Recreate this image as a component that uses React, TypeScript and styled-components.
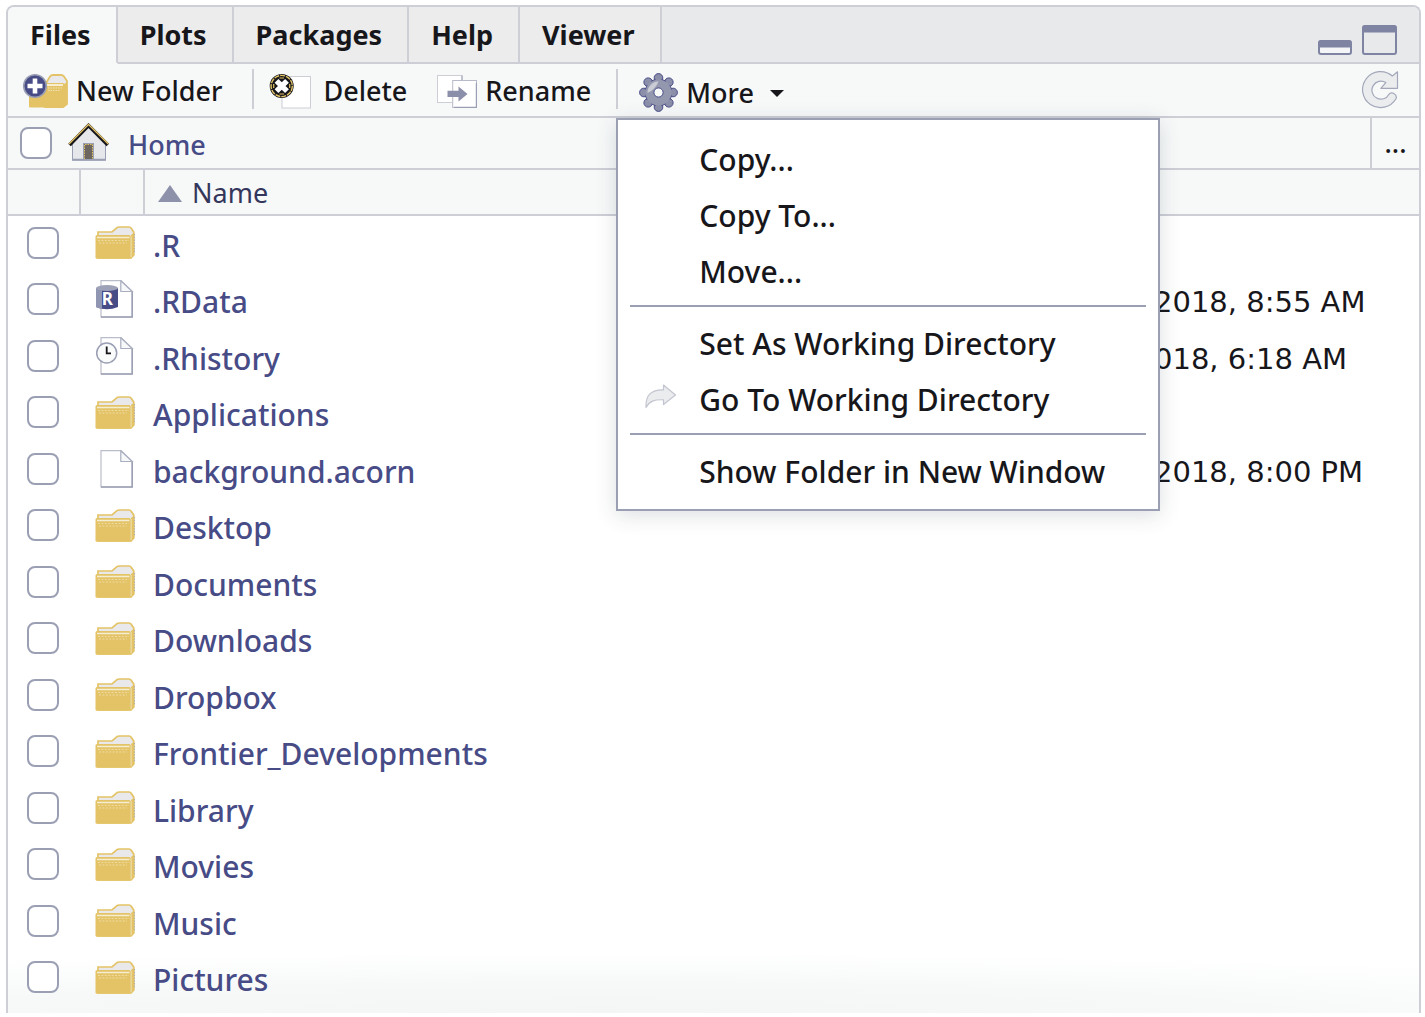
import React, { useState } from "react";
import styled, { createGlobalStyle, css } from "styled-components";

const color = {
  line: "#cdced6",
  edge: "#9a9fb3",
  strip: "#e8e9eb",
  tab: "#ececed",
  panel: "#f7f9f9",
  ink: "#17171b",
  link: "#474b86",
  gold: "#e3c366",
};

const GlobalStyle = createGlobalStyle`
  * { box-sizing: border-box; }
  body {
    margin: 0;
    background: #fff;
    color: ${color.ink};
    font-family: "Noto Sans", "Open Sans", sans-serif;
    font-weight: 500;
  }
  button {
    font: inherit;
    color: inherit;
    background: none;
    border: 0;
    padding: 0;
    margin: 0;
    cursor: pointer;
  }
  svg { display: block; flex: none; }
`;

const Page = styled.main`
  padding: 5px 4px 4px 6px;
`;

const Pane = styled.section`
  border: 2px solid ${color.line};
  border-bottom: 0;
  border-radius: 8px 8px 0 0;
  padding-bottom: 6px;
  background: radial-gradient(ellipse 92% 60px at 42% 100%, #f4f6f6 0%, #f7f9f9 50%, #fff 100%);
`;

const TabStrip = styled.div`
  display: flex;
  height: 57px;
  background: ${color.strip};
  border-radius: 6px 6px 0 0;
`;

const Tab = styled.button<{ $active: boolean }>`
  padding: 0 25px 0 22px;
  font-size: 27px;
  line-height: 36px;
  font-weight: 700;
  border-right: 2px solid ${color.line};
  border-bottom: 2px solid ${color.line};
  background: ${color.tab};
  ${(p) =>
    p.$active &&
    css`
      background: ${color.panel};
      border-bottom-color: ${color.panel};
      border-top-left-radius: 6px;
    `}
`;

const WindowButtons = styled.div`
  flex: 1;
  display: flex;
  justify-content: flex-end;
  align-items: flex-end;
  gap: 10px;
  padding: 0 22px 7px 0;
  border-bottom: 2px solid ${color.line};
`;

const Toolbar = styled.div`
  display: flex;
  align-items: center;
  height: 54px;
  padding: 2px 20px 0 14px;
  background: ${color.panel};
  border-bottom: 2px solid ${color.line};
  font-size: 27px;
  line-height: 36px;
`;

const ToolButton = styled.button<{ $gap: number }>`
  display: flex;
  align-items: center;
  gap: ${(p) => p.$gap}px;
  white-space: nowrap;

  & + & {
    margin-left: 30px;
  }
`;

const Divider = styled.span<{ $before: number; $after: number }>`
  width: 2px;
  height: 40px;
  margin: 0 ${(p) => p.$after}px 4px ${(p) => p.$before}px;
  background: ${color.line};
`;

const MenuAnchor = styled.div`
  position: relative;
  align-self: stretch;
  display: flex;
  align-items: center;
  padding-top: 3px;
`;

const Caret = styled.span`
  margin: 2px 0 0 8px;
  border: 7px solid transparent;
  border-top-color: ${color.ink};
  border-bottom: 0;
`;

const Menu = styled.div`
  position: absolute;
  z-index: 2;
  top: calc(100% + 2px);
  left: -23px;
  width: 544px;
  padding: 12px 12px 9px;
  background: #fff;
  border: 2px solid ${color.edge};
  box-shadow: 0 4px 20px rgba(40, 50, 60, 0.16);
`;

const MenuItem = styled.button`
  display: grid;
  grid-template-columns: 32px 1fr;
  gap: 22px;
  align-items: center;
  width: 100%;
  height: 56px;
  padding-left: 15px;
  font-size: 30px;
  line-height: 40px;
  text-align: left;
  white-space: nowrap;
`;

const MenuRule = styled.hr`
  height: 2px;
  margin: 5px 0 9px;
  border: 0;
  background: ${color.edge};
`;

const Refresh = styled.button`
  margin-left: auto;
  padding-bottom: 4px;
`;

const PathBar = styled.nav`
  display: flex;
  align-items: center;
  height: 52px;
  padding-left: 12px;
  background: ${color.panel};
  border-bottom: 2px solid ${color.line};
  font-size: 27px;
  line-height: 36px;
`;

const HomeLink = styled.a`
  display: flex;
  align-items: flex-start;
  gap: 18px;
  margin-left: 16px;
  color: ${color.link};
  text-decoration: none;
`;

const HomeLabel = styled.span`
  padding-top: 4px;
`;

const Browse = styled.button`
  align-self: stretch;
  width: 49px;
  margin-left: auto;
  border-left: 2px solid ${color.line};
`;

const Check = styled.input`
  appearance: none;
  display: block;
  flex: none;
  width: 32px;
  height: 32px;
  margin: 0;
  background: #fff;
  border: 2px solid ${color.edge};
  border-radius: 8px;

  &:checked {
    background: ${color.link};
  }
`;

const FileTable = styled.table`
  width: 100%;
  border-collapse: separate;
  border-spacing: 0;
  table-layout: fixed;
`;

const HeadCell = styled.th<{ $width?: number; $ruled?: boolean }>`
  width: ${(p) => (p.$width ? `${p.$width}px` : "auto")};
  height: 46px;
  padding: 0;
  background: ${color.panel};
  border-bottom: 2px solid ${color.line};
  border-right: ${(p) => (p.$ruled ? `2px solid ${color.line}` : "0")};
  font-size: 27px;
  line-height: 36px;
  font-weight: 400;
  text-align: left;
`;

const SortButton = styled.button`
  display: flex;
  align-items: center;
  gap: 9px;
  padding: 2px 0 0 12px;
  color: #34365c;
`;

const FileRow = styled.tr`
  height: 57px;

  &:nth-child(even) {
    height: 56px;
  }
`;

const Cell = styled.td<{ $left: number; $raised?: boolean }>`
  padding: ${(p) => (p.$raised ? 0 : 2)}px 0 ${(p) => (p.$raised ? 4 : 0)}px ${(p) => p.$left}px;
  font-size: 30px;
  line-height: 40px;
  white-space: nowrap;
`;

const DateCell = styled(Cell)`
  font-family: "DejaVu Sans", sans-serif;
  font-size: 29px;
`;

const FileLink = styled.a`
  color: ${color.link};
  text-decoration: none;
`;

function NewFolderIcon() {
  return (
    <svg width="46" height="36" viewBox="0 0 46 36" aria-hidden="true">
      <path d="M23 12 L28 3.5 Q29 2 31 2 H39 Q41 2 42 3.5 L45 8 V31 L41 34 H23 Z" fill="#e9e9ec" stroke={color.gold} strokeWidth="1.8" />
      <path d="M42 11 L45 9 V31 L42 34 Z" fill={color.gold} />
      <rect x="7" y="10" width="35" height="24.5" rx="1" fill={color.gold} />
      <path d="M25 12 H41" stroke="#fff" strokeWidth="1.4" />
      <path d="M26 15 H40 M26 17.5 H38" stroke="#f1e2b2" strokeWidth="1" strokeDasharray="1.5 1" />
      <circle cx="13" cy="13" r="11.3" fill={color.link} stroke={color.edge} strokeWidth="1.6" />
      <path d="M13 5.5 V20.5 M5.5 13 H20.5" stroke="#fff" strokeWidth="4.6" />
    </svg>
  );
}

function DeleteIcon() {
  return (
    <svg width="42" height="36" viewBox="0 0 42 36" aria-hidden="true">
      <rect x="13" y="3.5" width="28.5" height="31.5" fill="#fff" stroke={color.line} />
      <circle cx="12.7" cy="13" r="12" fill={color.ink} />
      <circle cx="12.7" cy="13" r="10.6" fill="none" stroke={color.gold} strokeWidth="1.4" strokeDasharray="5 1" />
      <path d="M7.5 7.8 L18 18.2 M18 7.8 L7.5 18.2" stroke="#fff" strokeWidth="5.4" />
      <path d="M10.5 5 h4.5 M10.5 21 h4.5 M4.7 11 v4 M20.7 11 v4" stroke={color.gold} strokeWidth="1.2" />
    </svg>
  );
}

function RenameIcon() {
  return (
    <svg width="40" height="33" viewBox="0 0 40 33" aria-hidden="true">
      <rect x="0.5" y="0.5" width="24.5" height="27" fill="#fff" stroke={color.line} />
      <path d="M25 0.5 V5" stroke={color.edge} />
      <rect x="15.7" y="5.5" width="23.8" height="27" fill="#fff" stroke="#b7bac9" />
      <path d="M39.5 8 V32.5 H17" fill="none" stroke={color.edge} strokeWidth="1.4" />
      <path d="M10.5 15.8 H21.5 V11.5 L30.5 19 L21.5 26.5 V22 H10.5 Z" fill="#8b8fa9" />
    </svg>
  );
}

function GearIcon() {
  const teeth = Array.from({ length: 8 }, (_, i) => {
    const a = (i * Math.PI) / 4;
    return { x: 19.5 + 14.6 * Math.cos(a), y: 19.5 + 14.6 * Math.sin(a) };
  });
  return (
    <svg width="39" height="39" viewBox="0 0 39 39" aria-hidden="true">
      {teeth.map((t, i) => (
        <circle key={i} cx={t.x} cy={t.y} r="4.3" fill="#8b8fa9" stroke={color.link} strokeWidth="1" />
      ))}
      <circle cx="19.5" cy="19.5" r="13.8" fill={color.link} />
      {teeth.map((t, i) => (
        <circle key={i} cx={t.x} cy={t.y} r="3.2" fill="#8b8fa9" />
      ))}
      <circle cx="19.5" cy="19.5" r="13" fill="#9498ae" />
      <path d="M8.5 20 A11 11 0 0 1 19.5 8.5 A20 20 0 0 1 8.5 20 Z" fill="#c9cbd5" />
      <circle cx="19.5" cy="19.5" r="4.6" fill="#f7f9f9" stroke={color.link} strokeWidth="1" />
    </svg>
  );
}

function RefreshIcon() {
  return (
    <svg width="37" height="39" viewBox="0 0 37 39" aria-hidden="true">
      <path
        d="M35.5 1.8 V18.3 H18.8 L23.8 12.6 A9 9 0 1 0 27 24.2 Q28.6 22 31.5 23.2 Q35.4 25.2 34 28.8 A18 18 0 1 1 30.4 6 Z"
        fill="#ebecee"
        stroke="#a3a7b9"
        strokeWidth="1.2"
        strokeLinejoin="round"
      />
    </svg>
  );
}

function MinimizeIcon() {
  return (
    <svg width="34" height="15" viewBox="0 0 34 15" aria-hidden="true">
      <rect x="1" y="1" width="32" height="13" rx="2" fill="#f4f5f6" stroke="#7f84a3" strokeWidth="2" />
      <path d="M0 7.5 V4 Q0 0 4 0 H30 Q34 0 34 4 V7.5 Z" fill="#7f84a3" />
    </svg>
  );
}

function MaximizeIcon() {
  return (
    <svg width="35" height="30" viewBox="0 0 35 30" aria-hidden="true">
      <rect x="1" y="1" width="33" height="28" rx="2" fill={color.strip} stroke="#7f84a3" strokeWidth="2" />
      <path d="M0 7.5 V4 Q0 0 4 0 H31 Q35 0 35 4 V7.5 Z" fill="#7f84a3" />
    </svg>
  );
}

function HomeIcon() {
  return (
    <svg width="42" height="38" viewBox="0 0 42 38" aria-hidden="true">
      <path d="M4.5 20 L20.5 4 L37.5 20 V37 H4.5 Z" fill="#e6e7ea" stroke={color.edge} />
      <path d="M4 36.7 H38" stroke={color.edge} strokeWidth="2" />
      <rect x="15.5" y="20.5" width="10" height="16" fill="#6d6660" stroke={color.edge} />
      <path d="M16.5 36 V21.5 H24.5 V36" fill="none" stroke={color.gold} strokeWidth="1" strokeDasharray="1.5 1" />
      <path d="M1.5 22 L20.5 2.5 L39.8 22" fill="none" stroke={color.ink} strokeWidth="3.6" />
      <path d="M1 21 L20.5 1.5 L40.3 21" fill="none" stroke={color.gold} strokeWidth="1.3" />
    </svg>
  );
}

function GoToIcon() {
  return (
    <svg width="32" height="33" viewBox="0 0 32 33" aria-hidden="true">
      <path
        d="M1 23.5 C0.5 11 6 5.5 18.5 5.8 V1 L30.5 11 L18.5 20.5 V15.8 C9 15.5 4.5 17 1 23.5 Z"
        fill="#ebecee"
        stroke="#c3c5d0"
        strokeWidth="1.2"
        strokeLinejoin="round"
      />
    </svg>
  );
}

function FolderIcon() {
  return (
    <svg width="40" height="33" viewBox="0 0 40 33" aria-hidden="true">
      <path d="M3 10 V6 H17 L22 1.6 Q23 1 24.5 1 H34 Q35.5 1 36.2 2.2 L38.7 6 V29 L36 32 H3 Z" fill="#e9e9ec" stroke={color.gold} strokeWidth="1.7" />
      <path d="M36 9 L39.3 6.5 V29.5 L36 32.5 Z" fill={color.gold} />
      <path d="M36.2 10 V31" stroke="#f0e0ac" strokeWidth="1" />
      <rect x="0.5" y="9" width="35.2" height="23.8" rx="1.5" fill={color.gold} />
      <path d="M2 11.5 H34.5" stroke="#f5edd2" strokeWidth="1.6" />
      <path d="M3 14.5 H34 M4 17 H32" stroke="#eedba0" strokeWidth="1" strokeDasharray="2 1.4" />
      <path d="M39.4 8 V27" stroke={color.edge} strokeWidth="0.8" strokeDasharray="1.4 1.4" />
    </svg>
  );
}

function Sheet() {
  return (
    <>
      <path d="M6 0.7 H26 L37.2 11.5 V37 H6 Z" fill="#fff" stroke="#b9bcc9" strokeWidth="1.2" />
      <path d="M37.2 11.5 V37 H6" fill="none" stroke={color.edge} strokeWidth="1.5" />
      <path d="M25.8 0.7 V11.5 H37.2 Z" fill="#f7f8f9" stroke="#a9adbf" strokeWidth="1.2" />
    </>
  );
}

function FileIcon() {
  return (
    <svg width="40" height="38" viewBox="0 0 40 38" aria-hidden="true">
      <Sheet />
    </svg>
  );
}

function DataIcon() {
  return (
    <svg width="40" height="38" viewBox="0 0 40 38" aria-hidden="true">
      <Sheet />
      <path d="M1 8 V27 Q12 31.5 23 27 V8 Z" fill={color.link} />
      <path d="M1 8 V27 Q4 28.6 7 29 V8 Z" fill="#9095b2" />
      <ellipse cx="12" cy="8" rx="11" ry="3" fill="#9ea2b8" />
      <text x="12.3" y="25" textAnchor="middle" fontSize="17" fontWeight="700" fill="#fff">
        R
      </text>
    </svg>
  );
}

function HistoryIcon() {
  return (
    <svg width="40" height="38" viewBox="0 0 40 38" aria-hidden="true">
      <Sheet />
      <circle cx="11.7" cy="16" r="10" fill="#fafbfb" stroke={color.edge} strokeWidth="1.5" />
      <path d="M11.7 9.5 V16.3 H16" fill="none" stroke={color.ink} strokeWidth="1.8" />
    </svg>
  );
}

const icons = {
  folder: FolderIcon,
  file: FileIcon,
  data: DataIcon,
  history: HistoryIcon,
};

type Entry = { name: string; kind: keyof typeof icons; modified?: string };

const entries: Entry[] = [
  { name: ".R", kind: "folder" },
  { name: ".RData", kind: "data", modified: "2018, 8:55 AM" },
  { name: ".Rhistory", kind: "history", modified: "018, 6:18 AM" },
  { name: "Applications", kind: "folder" },
  { name: "background.acorn", kind: "file", modified: "2018, 8:00 PM" },
  { name: "Desktop", kind: "folder" },
  { name: "Documents", kind: "folder" },
  { name: "Downloads", kind: "folder" },
  { name: "Dropbox", kind: "folder" },
  { name: "Frontier_Developments", kind: "folder" },
  { name: "Library", kind: "folder" },
  { name: "Movies", kind: "folder" },
  { name: "Music", kind: "folder" },
  { name: "Pictures", kind: "folder" },
];

const tabs = ["Files", "Plots", "Packages", "Help", "Viewer"];

export default function App() {
  const [active, setActive] = useState("Files");
  const [menuOpen, setMenuOpen] = useState(true);

  return (
    <Page>
      <GlobalStyle />
      <Pane>
        <TabStrip role="tablist">
          {tabs.map((name) => (
            <Tab key={name} role="tab" aria-selected={name === active} $active={name === active} onClick={() => setActive(name)}>
              {name}
            </Tab>
          ))}
          <WindowButtons>
            <button aria-label="Minimize">
              <MinimizeIcon />
            </button>
            <button aria-label="Maximize">
              <MaximizeIcon />
            </button>
          </WindowButtons>
        </TabStrip>

        <Toolbar>
          <ToolButton $gap={8}>
            <NewFolderIcon />
            New Folder
          </ToolButton>
          <Divider $before={30} $after={15} />
          <ToolButton $gap={12}>
            <DeleteIcon />
            Delete
          </ToolButton>
          <ToolButton $gap={8}>
            <RenameIcon />
            Rename
          </ToolButton>
          <Divider $before={25} $after={21} />
          <MenuAnchor>
            <ToolButton $gap={8} aria-haspopup="menu" aria-expanded={menuOpen} onClick={() => setMenuOpen(!menuOpen)}>
              <GearIcon />
              More
              <Caret />
            </ToolButton>
            {menuOpen && (
              <Menu role="menu">
                <MenuItem role="menuitem"><span />Copy...</MenuItem>
                <MenuItem role="menuitem"><span />Copy To...</MenuItem>
                <MenuItem role="menuitem"><span />Move...</MenuItem>
                <MenuRule />
                <MenuItem role="menuitem"><span />Set As Working Directory</MenuItem>
                <MenuItem role="menuitem"><GoToIcon />Go To Working Directory</MenuItem>
                <MenuRule />
                <MenuItem role="menuitem"><span />Show Folder in New Window</MenuItem>
              </Menu>
            )}
          </MenuAnchor>
          <Refresh aria-label="Refresh">
            <RefreshIcon />
          </Refresh>
        </Toolbar>

        <PathBar>
          <Check type="checkbox" aria-label="Select all" />
          <HomeLink href="#home">
            <HomeIcon />
            <HomeLabel>Home</HomeLabel>
          </HomeLink>
          <Browse aria-label="Browse">...</Browse>
        </PathBar>

        <FileTable>
          <thead>
            <tr>
              <HeadCell $width={73} $ruled />
              <HeadCell $width={64} $ruled />
              <HeadCell>
                <SortButton>
                  <svg width="26" height="17" viewBox="0 0 26 17" aria-hidden="true">
                    <path d="M13 0 L25 17 H1 Z" fill="#8d91aa" />
                  </svg>
                  Name
                </SortButton>
              </HeadCell>
              <HeadCell $width={265} />
            </tr>
          </thead>
          <tbody>
            {entries.map(({ name, kind, modified }) => {
              const Icon = icons[kind];
              return (
                <FileRow key={name}>
                  <Cell $left={19} $raised>
                    <Check type="checkbox" aria-label={name} />
                  </Cell>
                  <Cell $left={14} $raised>
                    <Icon />
                  </Cell>
                  <Cell $left={8}>
                    <FileLink href={`#${name}`}>{name}</FileLink>
                  </Cell>
                  <DateCell $left={0}>{modified}</DateCell>
                </FileRow>
              );
            })}
          </tbody>
        </FileTable>
      </Pane>
    </Page>
  );
}
